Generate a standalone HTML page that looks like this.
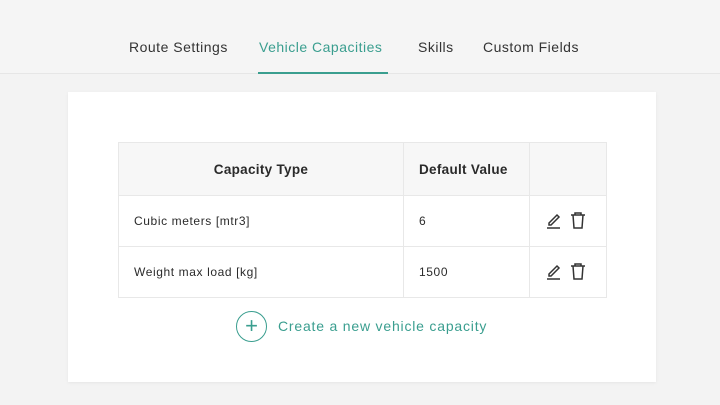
<!DOCTYPE html>
<html><head><style>
*{margin:0;padding:0;box-sizing:border-box}
body{width:720px;height:405px;background:#f3f3f3;font-family:"Liberation Sans",sans-serif;position:relative;overflow:hidden;color:#2b2b2b}
.hdr{position:absolute;left:0;top:0;width:720px;height:74px;background:#f5f5f5;border-bottom:1px solid #e6e6e6}
.tab{position:absolute;top:39px;font-size:14px;color:#333;letter-spacing:0.5px}
.ul{position:absolute;left:258px;top:72px;width:130px;height:2px;background:#3a9e8f}
.card{position:absolute;left:68px;top:92px;width:588px;height:290px;background:#fff;box-shadow:0 1px 3px rgba(0,0,0,.06)}
table{position:absolute;left:50px;top:50px;border-collapse:collapse;font-size:12px;letter-spacing:0.6px}
td,th{border:1px solid #e8e8e8;height:51px;text-align:left;padding-left:15px}
th{background:#f7f7f7;font-size:13.5px;font-weight:bold;color:#2a2a2a;height:53px;letter-spacing:0.3px}
.c{text-align:center;padding:0}
.add{position:absolute;left:168px;top:219px;width:31px;height:31px;border:1.5px solid #3a9e8f;border-radius:50%;color:#3a9e8f;font-size:22px;line-height:27px;text-align:center}
.addt{position:absolute;left:210px;top:226px;color:#3a9e8f;font-size:14px;letter-spacing:0.8px}
</style></head><body>
<div class="hdr"></div>
<div class="tab" style="left:129px">Route Settings</div>
<div class="tab" style="left:259px;color:#3a9e8f">Vehicle Capacities</div>
<div class="tab" style="left:418px">Skills</div>
<div class="tab" style="left:483px">Custom Fields</div>
<div class="ul"></div>
<div class="card">
<table>
<tr><th class="c" style="width:285px">Capacity Type</th><th style="width:126px">Default Value</th><th style="width:77px"></th></tr>
<tr><td>Cubic meters [mtr3]</td><td>6</td><td class="c"><svg width="50" height="20" viewBox="0 0 50 20"><g fill="none" stroke="#333" stroke-width="1.5"><path d="M6 13 L14 5 L16 7 L8 15 L6 15 Z"/><path d="M4 18 H17"/><path d="M28 5 H42 M32 5 V3 H38 V5 M30 5 L31 18 H39 L40 5"/></g></svg></td></tr>
<tr><td>Weight max load [kg]</td><td>1500</td><td class="c"><svg width="50" height="20" viewBox="0 0 50 20"><g fill="none" stroke="#333" stroke-width="1.5"><path d="M6 13 L14 5 L16 7 L8 15 L6 15 Z"/><path d="M4 18 H17"/><path d="M28 5 H42 M32 5 V3 H38 V5 M30 5 L31 18 H39 L40 5"/></g></svg></td></tr>
</table>
<div class="add">+</div>
<div class="addt">Create a new vehicle capacity</div>
</div>
</body></html>
